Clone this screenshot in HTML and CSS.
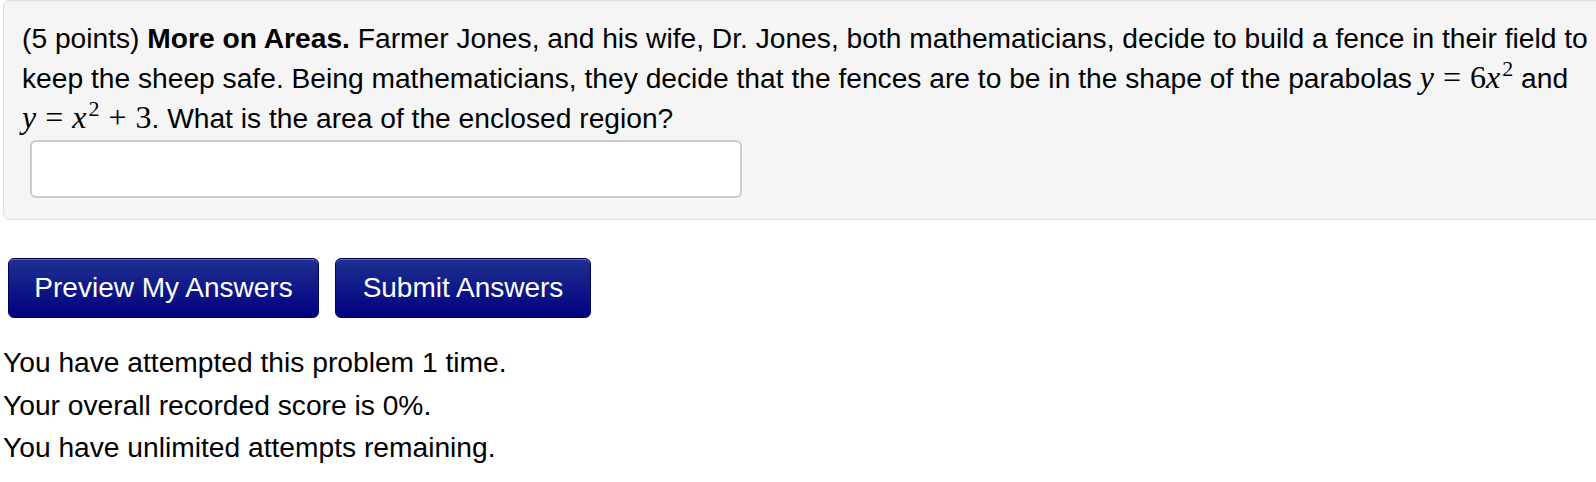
FILE: index.html
```html
<!DOCTYPE html>
<html>
<head>
<meta charset="utf-8">
<link rel="stylesheet" href="styles.css">
</head>
<body>
<div class="page">
  <div class="well">
    <p class="problem">(5 points) <b>More on Areas.</b> Farmer Jones, and his wife, Dr. Jones, both mathematicians, decide to build a fence in their field to keep the sheep safe. Being mathematicians, they decide that the fences are to be in the shape of the parabolas <span class="math"><i>y</i><span class="op">=</span>6<i>x</i><sup>2</sup></span> and <span class="math"><i>y</i><span class="op">=</span><i>x</i><sup>2</sup><span class="op">+</span>3</span>. What is the area of the enclosed region?</p>
    <input class="answer" type="text">
  </div>
  <div class="buttons">
    <button class="btn btn-preview">Preview My Answers</button>
    <button class="btn btn-submit">Submit Answers</button>
  </div>
  <div class="status">
    <div>You have attempted this problem 1 time.</div>
    <div>Your overall recorded score is 0%.</div>
    <div>You have unlimited attempts remaining.</div>
  </div>
</div>
</body>
</html>
```

FILE: styles.css
```css
html, body {
  margin: 0;
  padding: 0;
  overflow: hidden;
  background: #ffffff;
}
body {
  font-family: "Liberation Sans", Arial, Helvetica, sans-serif;
  color: #000;
}
.page {
  padding: 0 0 0 3px;
  width: 1700px;
}
.well {
  background: #f5f5f5;
  border: 1px solid #e1e1e1;
  border-radius: 6px;
  box-shadow: inset 0 1px 1px rgba(0,0,0,0.04);
  padding: 18px 19px 21px 18px;
  width: 1640px;
}
.problem {
  margin: 0;
  font-size: 28.2px;
  line-height: 39px;
  width: 1572px;
}
.math {
  font-family: "Liberation Serif", "Times New Roman", serif;
  font-size: 32px;
  white-space: nowrap;
}
.math i {
  font-style: italic;
}
.math .op {
  margin: 0 9px;
}
.math sup {
  font-size: 22px;
  line-height: 0;
  vertical-align: 0.55em;
  margin-left: 2px;
}
.answer {
  display: block;
  margin: 2px 0 0 8px;
  width: 712px;
  height: 58px;
  box-sizing: border-box;
  border: 2px solid #cccccc;
  border-radius: 6px;
  background: #fff;
  padding: 0;
}
.buttons {
  display: flex;
  gap: 16px;
  margin: 38px 0 0 5px;
}
.btn {
  height: 60px;
  border: 1px solid #000060;
  border-radius: 6px;
  background: linear-gradient(#1f3190, #000080);
  box-shadow: inset 0 1px 0 rgba(255,255,255,0.3);
  color: #fff;
  font-family: "Liberation Sans", Arial, Helvetica, sans-serif;
  font-size: 28px;
  padding: 0;
}
.btn-preview { width: 311px; }
.btn-submit { width: 256px; }
.status {
  margin-top: 23px;
  font-size: 28.2px;
  line-height: 42.5px;
}
```
